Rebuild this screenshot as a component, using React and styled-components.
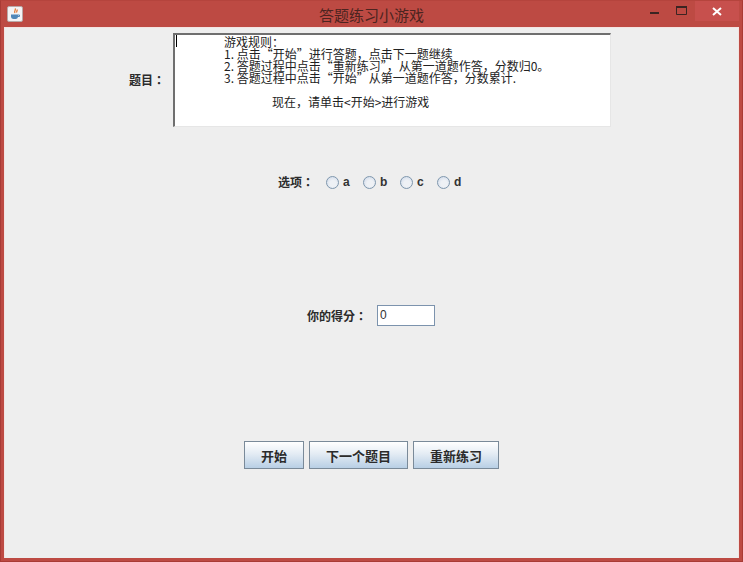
import React from "react";
import styled, { createGlobalStyle } from "styled-components";

const GlobalStyle = createGlobalStyle`
  html, body { margin: 0; padding: 0; }
  body { font-family: "Noto Sans CJK SC", "Liberation Sans", sans-serif; background: #bd4a43; }
`

const Frame = styled.div`
  width: 743px;
  height: 562px;
  box-sizing: border-box;
  display: flex;
  flex-direction: column;
  background: #bd4a43;
  border: 1px solid #a93b35;
  border-top-color: #b5443d;
  padding: 0 3px 3px 3px;
  overflow: hidden;
`

const TitleBar = styled.div`
  height: 26px;
  flex: none;
  display: grid;
  grid-template-columns: 1fr auto 1fr;
  align-items: center;
`

const AppIcon = styled.svg`
  width: 16px;
  height: 16px;
  margin-left: 3px;
  display: block;
`

const Title = styled.div`
  font-size: 15px;
  line-height: 20px;
  color: #4c2420;
  margin-top: 1px;
`

const WinButtons = styled.div`
  display: flex;
  justify-content: flex-end;
  align-self: start;
  height: 20px;
`

const WinButton = styled.div`
  width: ${p => p.$wide ? "44px" : "27px"};
  height: 20px;
  display: flex;
  align-items: center;
  justify-content: center;
  background: ${p => p.$close ? "#c7504d" : "transparent"};
`

const Content = styled.div`
  flex: 1;
  background: #eeeeee;
  border: 1px solid #f3e4e2;
  border-bottom: 0;
  display: flex;
  flex-direction: column;
  align-items: center;
  padding-top: 5px;
`

const Label = styled.span`
  font-family: "Noto Sans CJK TC", "Liberation Sans", sans-serif;
  font-size: 12px;
  line-height: 16px;
  font-weight: 700;
  color: #2b2b2b;
  white-space: nowrap;
`

const QuestionRow = styled.div`
  display: flex;
  align-items: center;
  gap: 8px;
  margin-left: -3px;
`

const RulesBox = styled.div`
  width: 438px;
  height: 94px;
  box-sizing: border-box;
  background: #ffffff;
  border: 1px solid #e6e6e6;
  border-top: 2px solid #6f6f6f;
  border-left: 2px solid #6f6f6f;
  position: relative;
  padding: 0 0 0 49px;
  font-size: 12px;
  line-height: 12px;
  color: #222222;
  white-space: pre;
`

const Caret = styled.i`
  position: absolute;
  left: 1px;
  top: 0;
  width: 1px;
  height: 12px;
  background: #000000;
`

const Line = styled.div`
  height: 12px;
  position: relative;
  top: 1px;
  padding-left: ${p => p.$indent || 0}px;
`

const OptionsRow = styled.div`
  display: flex;
  align-items: center;
  height: 20px;
  margin-top: 45px;
  margin-left: 9px;
`

const OptionList = styled.div`
  display: flex;
  margin-left: 12px;
`

const Option = styled.label`
  width: 37px;
  display: flex;
  align-items: center;
  gap: 4px;
  font-family: "Liberation Sans", sans-serif;
  font-size: 12px;
  font-weight: 700;
  color: #333333;
`

const Radio = styled.span`
  width: 13px;
  height: 13px;
  box-sizing: border-box;
  border-radius: 50%;
  border: 1px solid #7f97ad;
  background: radial-gradient(circle at 55% 60%, #eef1f5 35%, #cfdaea 90%);
`

const ScoreRow = styled.div`
  display: flex;
  align-items: center;
  gap: 10px;
  margin-top: 113px;
  margin-left: -1px;
`

const ScoreInput = styled.div`
  width: 58px;
  height: 21px;
  box-sizing: border-box;
  background: #ffffff;
  border: 1px solid #7c93ad;
  padding-left: 2px;
  font-family: "Liberation Sans", sans-serif;
  font-size: 12px;
  line-height: 19px;
  color: #333333;
`

const ButtonRow = styled.div`
  display: flex;
  gap: 5px;
  margin-top: 115px;
`

const Button = styled.button`
  width: ${p => p.$w}px;
  height: 28px;
  padding: 0;
  font-family: inherit;
  font-size: 13px;
  font-weight: 700;
  color: #2b2b2b;
  border: 1px solid #7a8a99;
  background: linear-gradient(#ffffff, #e4ecf4 45%, #b8cfe5);
`

const rules = [
  { text: "游戏规则：" },
  { text: "1. 点击“开始”进行答题，点击下一题继续" },
  { text: "2. 答题过程中点击“重新练习”，从第一道题作答，分数归0。" },
  { text: "3. 答题过程中点击“开始”从第一道题作答，分数累计." },
  { text: "" },
  { text: "现在，请单击<开始>进行游戏", indent: 48 },
]

const App = () => {
  return (
    <>
      <GlobalStyle />
      <Frame>
        <TitleBar>
          <AppIcon viewBox="0 0 16 16">
            <rect x="0.5" y="0.5" width="15" height="15" rx="1.5" fill="#f3f3f5" stroke="#b9a9a8" />
            <path d="M8 2.5c1.5 1.5-1.5 2.5 0 4.5M10 3.5c.8 1-1 1.8 0 3" fill="none" stroke="#e2712a" strokeWidth="1.2" />
            <path d="M4 8.5h7v2.5a2.5 2.5 0 0 1-2.5 2h-2a2.5 2.5 0 0 1-2.5-2z" fill="#4f86b8" />
            <path d="M11 9h1.5v1.5H11" fill="none" stroke="#4f86b8" />
          </AppIcon>
          <Title>答题练习小游戏</Title>
          <WinButtons>
            <WinButton>
              <svg width="10" height="10" viewBox="0 0 10 10"><rect x="0" y="6" width="9" height="2" fill="#3b2422" /></svg>
            </WinButton>
            <WinButton>
              <svg width="11" height="10" viewBox="0 0 11 10"><path d="M.5.5h10v8H.5z" fill="none" stroke="#3b2422" /><rect x="0" y="0" width="11" height="2" fill="#3b2422" /></svg>
            </WinButton>
            <WinButton $wide $close>
              <svg width="10" height="9" viewBox="0 0 10 9"><path d="M1 1l8 7M9 1l-8 7" stroke="#ffffff" strokeWidth="2" /></svg>
            </WinButton>
          </WinButtons>
        </TitleBar>
        <Content>
          <QuestionRow>
            <Label>题目：</Label>
            <RulesBox>
              <Caret />
              {rules.map((rule, i) => (
                <Line key={i} $indent={rule.indent}>{rule.text}</Line>
              ))}
            </RulesBox>
          </QuestionRow>
          <OptionsRow>
            <Label>选项：</Label>
            <OptionList>
              {["a", "b", "c", "d"].map(name => (
                <Option key={name}>
                  <Radio />
                  {name}
                </Option>
              ))}
            </OptionList>
          </OptionsRow>
          <ScoreRow>
            <Label>你的得分：</Label>
            <ScoreInput>0</ScoreInput>
          </ScoreRow>
          <ButtonRow>
            <Button $w={60}>开始</Button>
            <Button $w={99}>下一个题目</Button>
            <Button $w={86}>重新练习</Button>
          </ButtonRow>
        </Content>
      </Frame>
    </>
  )
}

export default App;
